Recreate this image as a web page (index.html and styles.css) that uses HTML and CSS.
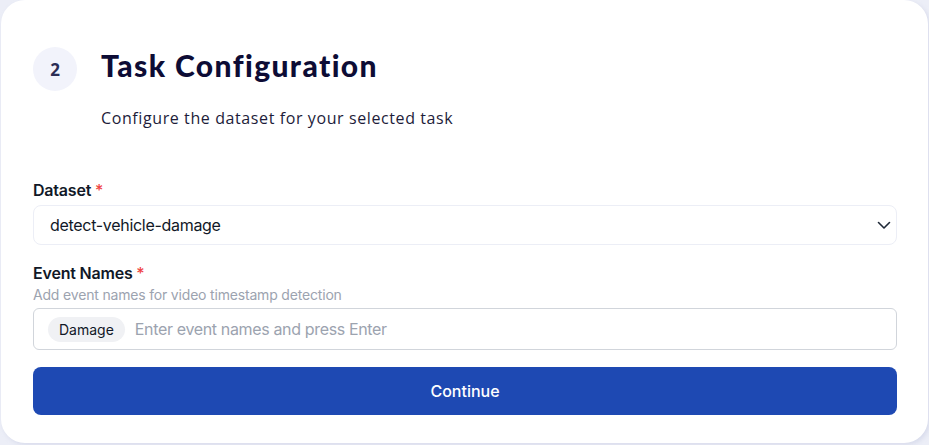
FILE: index.html
```html
<!DOCTYPE html>
<html lang="en">
<head>
<meta charset="utf-8">
<title>Task Configuration</title>
<link rel="stylesheet" href="styles.css">
</head>
<body>
<main class="card">
  <header class="header">
    <div class="step">2</div>
    <div class="header-text">
      <h1 class="title">Task Configuration</h1>
      <p class="subtitle">Configure the dataset for your selected task</p>
    </div>
  </header>

  <div class="field field-dataset">
    <label class="label">Dataset <span class="req">*</span></label>
    <div class="select">
      <span class="select-value">detect-vehicle-damage</span>
      <svg class="chevron" width="16" height="16" viewBox="0 0 16 16" fill="none" stroke="#1f2937" stroke-width="1.6" stroke-linecap="round" stroke-linejoin="round"><path d="M2.5 5.5 8 11l5.5-5.5"/></svg>
    </div>
  </div>

  <div class="field field-events">
    <label class="label">Event Names <span class="req">*</span></label>
    <p class="helper">Add event names for video timestamp detection</p>
    <div class="tag-input">
      <span class="chip">Damage</span>
      <span class="placeholder">Enter event names and press Enter</span>
    </div>
  </div>

  <button class="btn">Continue</button>
</main>
</body>
</html>
```
FILE: styles.css
```css
* { box-sizing: border-box; }
html, body { margin: 0; padding: 0; }
body {
  background: #eceef7;
  font-family: Inter, "Liberation Sans", sans-serif;
  height: 445px;
  overflow: hidden;
}
.card {
  background: #ffffff;
  border-radius: 24px;
  margin: 0 1px 0 1px;
  height: 443px;
  padding: 47px 31px 0 32px;
  box-shadow: 2px 2px 4px rgba(180, 186, 215, 0.35);
}
.header {
  display: flex;
  gap: 24px;
  align-items: flex-start;
}
.step {
  width: 44px;
  height: 44px;
  border-radius: 50%;
  background: #f2f3fb;
  color: #2b2d55;
  font-family: "Open Sans", sans-serif;
  font-weight: 700;
  font-size: 17px;
  display: flex;
  align-items: center;
  justify-content: center;
  flex-shrink: 0;
}
.header-text { display: flex; flex-direction: column; }
.title {
  margin: 0;
  font-family: Lato, "Open Sans", sans-serif;
  font-weight: 900;
  font-size: 30px;
  line-height: 36px;
  color: #0d0c35;
  letter-spacing: 1.4px;
}
.subtitle {
  margin: 23px 0 0;
  font-family: "Open Sans", sans-serif;
  font-size: 16px;
  line-height: 24px;
  color: #1d1c3a;
  letter-spacing: 0.6px;
}
.field { display: flex; flex-direction: column; }
.field-dataset { margin-top: 48px; }
.field-events { margin-top: 16px; }
.label {
  font-size: 16px;
  font-weight: 600;
  line-height: 24px;
  color: #111827;
  margin-bottom: 3px;
  letter-spacing: -0.2px;
}
.req { color: #ef4444; font-weight: 500; }
.select {
  height: 40px;
  border: 1px solid #eceef6;
  border-radius: 8px;
  display: flex;
  align-items: center;
  justify-content: space-between;
  padding: 0 4px 0 16px;
}
.select-value { font-size: 16px; color: #111827; letter-spacing: -0.3px; }
.helper {
  margin: -3px 0 3px;
  font-size: 14px;
  line-height: 20px;
  color: #9ca3af;
  letter-spacing: -0.18px;
}
.tag-input {
  height: 42px;
  border: 1px solid #d1d5db;
  border-radius: 6px;
  display: flex;
  align-items: center;
  gap: 10px;
  padding: 0 14px;
}
.chip {
  height: 25px;
  padding: 0 11px;
  border-radius: 13px;
  background: #f0f1f4;
  font-size: 14px;
  color: #111827;
  display: flex;
  align-items: center;
}
.placeholder { font-size: 16px; color: #9ca3af; letter-spacing: -0.35px; }
.btn {
  display: block;
  width: 100%;
  margin-top: 17px;
  height: 48px;
  border: 0;
  border-radius: 8px;
  background: #1e49b3;
  color: #ffffff;
  font-family: Inter, "Liberation Sans", sans-serif;
  font-size: 16px;
  font-weight: 500;
}
```
